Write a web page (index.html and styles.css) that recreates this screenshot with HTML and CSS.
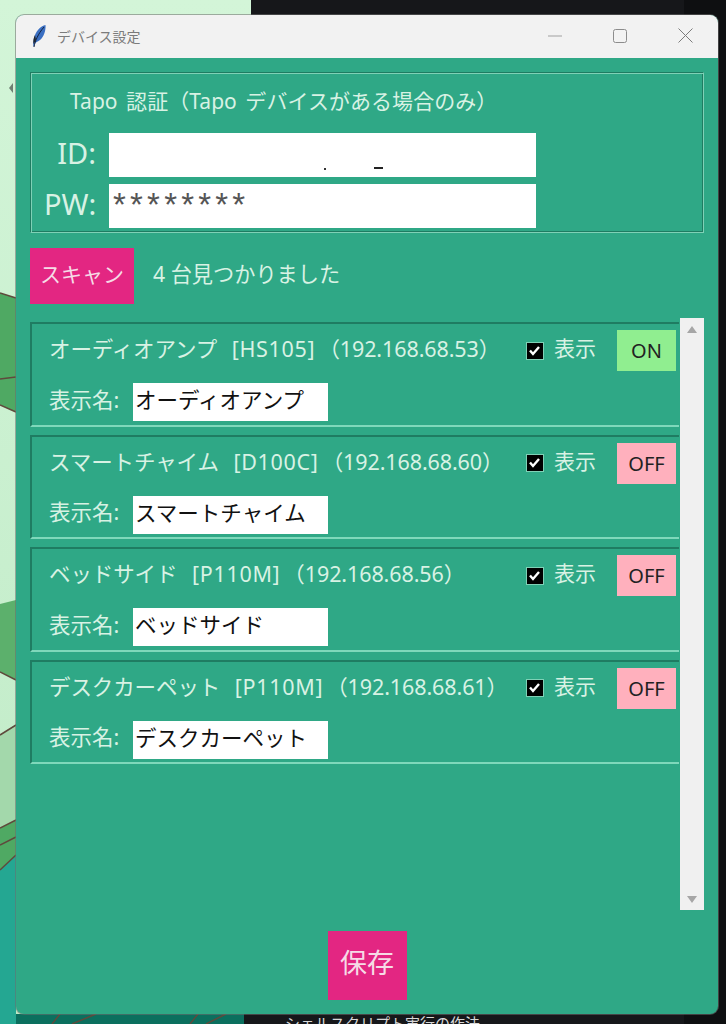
FILE: index.html
```html
<!DOCTYPE html>
<html>
<head>
<meta charset="utf-8">
<title>デバイス設定</title>
<link rel="stylesheet" href="styles.css">
</head>
<body>

<!-- desktop behind the window -->
<div class="desktop">
  <svg class="wallpaper" width="726" height="1024" viewBox="0 0 726 1024">
    <defs>
      <linearGradient id="pale" x1="0" y1="0" x2="0" y2="1">
        <stop offset="0" stop-color="#d3f5d8"/>
        <stop offset="1" stop-color="#bfeac6"/>
      </linearGradient>
    </defs>
    <rect x="0" y="0" width="251" height="1024" fill="url(#pale)"/>
    <polygon points="0,293 16,298 16,412 0,405" fill="#4fa963"/>
    <polygon points="0,604 16,600 16,680 0,672" fill="#5cb06c"/>
    <polygon points="0,735 16,725 16,820 0,828" fill="#a3d8ab"/>
    <polygon points="0,828 16,820 16,855 0,870" fill="#4fa963"/>
    <polygon points="0,870 16,855 16,1024 0,1024" fill="#24a792"/>
    <rect x="16" y="1014" width="228" height="10" fill="#0b6f5e"/>
    <path d="M13 83L9 88L13 93Z" fill="#6f7f72"/>
    <path d="M0 293L16 298M0 379L16 377M0 405L16 412M0 672L16 680M0 735L16 725M0 828L16 820M0 845L16 837M0 870L16 855M52 1024L60 1014M72 1024L96 1014M190 1024L198 1014M206 1024L226 1014" stroke="#5f4a3c" stroke-width="1.5" fill="none"/>
    <rect x="251" y="0" width="475" height="1014" fill="#16171a"/>
    <rect x="244" y="1014" width="482" height="10" fill="#16171a"/>
    <rect x="684" y="0" width="42" height="1024" fill="#0e0f11"/>
  </svg>
  <div class="behind-text">シェルスクリプト実行の作法</div>
</div>

<div class="window">
  <div class="titlebar">
    <svg class="feather" width="16" height="24" viewBox="0 0 16 24">
      <path d="M2.5 23C2 20 2 16 4 11C6 6 10 2 14.5 1C15 6 13 13 9 16C7 17.5 5 18 4 19.5Z" fill="#3a6fc2"/>
      <path d="M3 23C4 17 7 10 13 3" stroke="#14233f" stroke-width="1" fill="none"/>
      <path d="M2.5 20C2 17 2.5 14 4 11L5 16Z" fill="#23262b"/>
    </svg>
    <span class="window-title">デバイス設定</span>
    <div class="window-buttons">
      <svg width="14" height="14" viewBox="0 0 14 14"><path d="M0 7H14" stroke="#a0a0a0" stroke-width="1"/></svg>
      <svg width="14" height="14" viewBox="0 0 14 14"><rect x="0.5" y="0.5" width="13" height="13" rx="2" fill="none" stroke="#8c8c8c" stroke-width="1"/></svg>
      <svg width="15" height="15" viewBox="0 0 15 15"><path d="M0.5 0.5L14.5 14.5M14.5 0.5L0.5 14.5" stroke="#7c7c7c" stroke-width="1"/></svg>
    </div>
  </div>

  <div class="content">
    <div class="auth-frame">
      <div class="auth-title">Tapo 認証（Tapo デバイスがある場合のみ）</div>
      <div class="auth-row">
        <label class="auth-label">ID:</label>
        <div class="auth-input id-input"><i class="dot"></i><i class="dash"></i></div>
      </div>
      <div class="auth-row">
        <label class="auth-label">PW:</label>
        <div class="auth-input pw-input">********</div>
      </div>
    </div>

    <div class="scan-row">
      <button class="scan-button">スキャン</button>
      <span class="scan-result">4 台見つかりました</span>
    </div>

    <div class="device-area">
      <div class="device-list">
        <div class="device">
          <div class="device-top">
            <span class="device-name">オーディオアンプ <span class="model">[HS105]</span>（192.168.68.53）</span>
            <span class="check"><svg width="18" height="18" viewBox="0 0 18 18"><rect width="17" height="17" x="0.5" y="0.5" fill="#000" stroke="#7fd1b6" stroke-width="1"/><path d="M4 8.5L7 12L13 5" stroke="#fff" stroke-width="2.4" fill="none"/></svg><span class="check-text">表示</span></span>
            <span class="state on">ON</span>
          </div>
          <div class="device-bottom">
            <span class="name-label">表示名:</span>
            <div class="name-input">オーディオアンプ</div>
          </div>
        </div>
        <div class="device">
          <div class="device-top">
            <span class="device-name">スマートチャイム <span class="model">[D100C]</span>（192.168.68.60）</span>
            <span class="check"><svg width="18" height="18" viewBox="0 0 18 18"><rect width="17" height="17" x="0.5" y="0.5" fill="#000" stroke="#7fd1b6" stroke-width="1"/><path d="M4 8.5L7 12L13 5" stroke="#fff" stroke-width="2.4" fill="none"/></svg><span class="check-text">表示</span></span>
            <span class="state off">OFF</span>
          </div>
          <div class="device-bottom">
            <span class="name-label">表示名:</span>
            <div class="name-input">スマートチャイム</div>
          </div>
        </div>
        <div class="device">
          <div class="device-top">
            <span class="device-name">ベッドサイド <span class="model">[P110M]</span>（192.168.68.56）</span>
            <span class="check"><svg width="18" height="18" viewBox="0 0 18 18"><rect width="17" height="17" x="0.5" y="0.5" fill="#000" stroke="#7fd1b6" stroke-width="1"/><path d="M4 8.5L7 12L13 5" stroke="#fff" stroke-width="2.4" fill="none"/></svg><span class="check-text">表示</span></span>
            <span class="state off">OFF</span>
          </div>
          <div class="device-bottom">
            <span class="name-label">表示名:</span>
            <div class="name-input">ベッドサイド</div>
          </div>
        </div>
        <div class="device">
          <div class="device-top">
            <span class="device-name">デスクカーペット <span class="model">[P110M]</span>（192.168.68.61）</span>
            <span class="check"><svg width="18" height="18" viewBox="0 0 18 18"><rect width="17" height="17" x="0.5" y="0.5" fill="#000" stroke="#7fd1b6" stroke-width="1"/><path d="M4 8.5L7 12L13 5" stroke="#fff" stroke-width="2.4" fill="none"/></svg><span class="check-text">表示</span></span>
            <span class="state off">OFF</span>
          </div>
          <div class="device-bottom">
            <span class="name-label">表示名:</span>
            <div class="name-input">デスクカーペット</div>
          </div>
        </div>
      </div>
      <div class="scrollbar">
        <svg width="14" height="10" viewBox="0 0 14 10"><path d="M7 2L12 9H2Z" fill="#a6a6a6"/></svg>
        <svg width="14" height="10" viewBox="0 0 14 10"><path d="M7 9L12 2H2Z" fill="#a6a6a6"/></svg>
      </div>
    </div>

    <div class="save-row">
      <button class="save-button">保存</button>
    </div>
  </div>
</div>

</body>
</html>
```

FILE: styles.css
```css
body, html {
  margin: 0;
  height: 100%;
  overflow: hidden;
  background-color: #16171a;
}

body {
  font-family: "Noto Sans", "Noto Sans CJK JP", sans-serif;
}

.desktop {
  position: absolute;
  top: 0;
  left: 0;
  width: 726px;
  height: 1024px;
  overflow: hidden;
}

.wallpaper {
  display: block;
}

.behind-text {
  position: absolute;
  top: 1013px;
  left: 285px;
  font-size: 15px;
  line-height: 20px;
  color: #d8d8d8;
}

.window {
  position: absolute;
  top: 15px;
  left: 16px;
  width: 702px;
  height: 999px;
  border-radius: 8px;
  overflow: hidden;
  background-color: #2fa886;
  box-shadow: 0 0 0 1px rgba(110, 110, 110, 0.55);
  display: flex;
  flex-direction: column;
}

.titlebar {
  box-sizing: border-box;
  height: 43px;
  flex: none;
  background-color: #f2f2f2;
  display: flex;
  align-items: center;
  padding-left: 15px;
  padding-bottom: 2px;
}

.feather {
  margin-right: 10px;
}

.window-title {
  font-size: 14px;
  color: #7b7b7b;
}

.window-buttons {
  margin-left: auto;
  display: flex;
  align-items: center;
  gap: 51px;
  padding-right: 25px;
}

.window-buttons svg {
  display: block;
}

.content {
  flex: 1;
  display: flex;
  flex-direction: column;
  padding: 14px;
  color: #d8f2e4;
}

.auth-frame {
  box-sizing: border-box;
  height: 161px;
  border: 1px solid;
  border-color: #1f7c62 #7fd1b6 #7fd1b6 #1f7c62;
  box-shadow: inset 1px 1px 0 #7fd1b6, inset -1px -1px 0 #1f7c62;
  padding: 13px 0 0 13px;
}

.auth-title {
  font-size: 21px;
  word-spacing: 3px;
  letter-spacing: 0.05px;
  line-height: 30px;
  padding-left: 26px;
  margin-bottom: 17px;
  white-space: nowrap;
}

.auth-row {
  display: flex;
  align-items: center;
  margin-bottom: 7px;
}

.auth-label {
  width: 52px;
  text-align: right;
  font-size: 29px;
  line-height: 40px;
  padding-bottom: 4px;
  margin-right: 13px;
}

.auth-input {
  width: 427px;
  height: 44px;
  background-color: #fff;
  box-sizing: border-box;
  position: relative;
}

.dot {
  position: absolute;
  left: 215px;
  top: 35px;
  width: 2px;
  height: 2px;
  background-color: #333;
}

.dash {
  position: absolute;
  left: 265px;
  top: 34px;
  width: 9px;
  height: 2px;
  background-color: #222;
}

.pw-input {
  color: #555;
  font-family: "Liberation Sans", sans-serif;
  font-size: 33px;
  line-height: 41px;
  padding-left: 4px;
  letter-spacing: 4.2px;
}

.scan-row {
  display: flex;
  align-items: center;
  margin-top: 15px;
  margin-bottom: 18px;
}

.scan-button, .save-button {
  background-color: #e32682;
  border: none;
  color: #f6dbe6;
  font-family: inherit;
  padding: 0;
}

.scan-button {
  width: 104px;
  height: 56px;
  font-size: 21px;
  padding-bottom: 6px;
}

.scan-result {
  margin-left: 19px;
  font-size: 21.2px;
  padding-bottom: 8px;
}

.device-area {
  display: flex;
  align-items: flex-start;
  height: 592px;
  margin-top: -4px;
}

.device-list {
  width: 650px;
  padding-top: 4px;
  display: flex;
  flex-direction: column;
  gap: 8px;
}

.device {
  box-sizing: border-box;
  height: 104.5px;
  border-top: 2px solid #1f7c62;
  border-left: 2px solid #1f7c62;
  border-bottom: 2px solid #7fd8bb;
  padding: 6px 3px 0 17px;
}

.device-top {
  display: flex;
  align-items: center;
  height: 41px;
}

.device-name {
  font-size: 21.5px;
  word-spacing: 9px;
  letter-spacing: -0.1px;
  white-space: nowrap;
  padding-bottom: 6px;
}

.model {
  letter-spacing: 0.7px;
  margin-right: 3px;
}

.check {
  margin-left: auto;
  display: flex;
  align-items: center;
  font-size: 21px;
  gap: 10px;
  margin-right: 21px;
}

.check svg {
  display: block;
}

.check-text {
  padding-bottom: 7px;
}

.state {
  width: 59px;
  height: 41px;
  font-size: 20px;
  line-height: 41px;
  text-align: center;
  color: #222;
}

.state.on {
  background-color: #90ee90;
}

.state.off {
  background-color: #ffb0bd;
}

.device-bottom {
  display: flex;
  align-items: center;
  margin-top: 11.5px;
}

.name-label {
  width: 84px;
  font-size: 21.5px;
  white-space: nowrap;
  padding-bottom: 8px;
}

.name-input {
  width: 195px;
  height: 38px;
  box-sizing: border-box;
  background-color: #fff;
  color: #111;
  font-size: 21.5px;
  line-height: 33px;
  padding-left: 2px;
  white-space: nowrap;
  overflow: hidden;
}

.scrollbar {
  width: 24px;
  height: 592px;
  margin-left: 1px;
  box-sizing: border-box;
  padding: 6px 0;
  background-color: #f0f0f0;
  display: flex;
  flex-direction: column;
  justify-content: space-between;
  align-items: center;
}

.save-row {
  display: flex;
  justify-content: center;
  margin-top: 21px;
}

.save-button {
  width: 79px;
  height: 69px;
  font-size: 27px;
  padding-bottom: 8px;
}
```
